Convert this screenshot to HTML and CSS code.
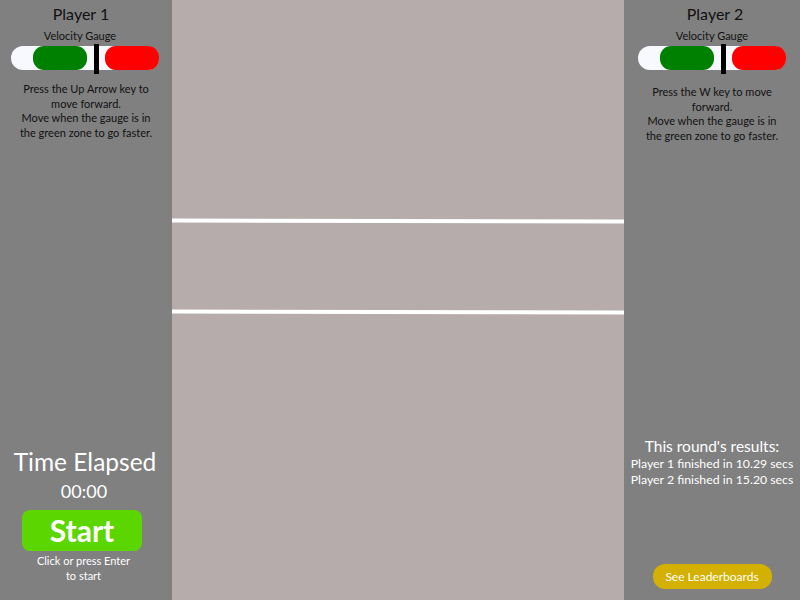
FILE: index.html
```html
<!DOCTYPE html>
<html>
<head>
<meta charset="utf-8">
<link rel="stylesheet" href="styles.css">
</head>
<body>
<div class="app">
  <aside class="panel panel-left">
    <div class="top">
      <h2 class="player">Player 1</h2>
      <div class="gauge-label">Velocity Gauge</div>
      <div class="gauge">
        <div class="zone-green"></div>
        <div class="marker"></div>
        <div class="zone-red"></div>
      </div>
      <p class="instructions">Press the Up Arrow key to<br>move forward.<br>Move when the gauge is in<br>the green zone to go faster.</p>
    </div>
    <div class="bottom-left">
      <div class="time-title">Time Elapsed</div>
      <div class="time-value">00:00</div>
      <button class="start-btn">Start</button>
      <p class="start-hint">Click or press Enter<br>to start</p>
    </div>
  </aside>
  <main class="track">
    <div class="lane-line line-1"></div>
    <div class="lane-line line-2"></div>
  </main>
  <aside class="panel panel-right">
    <div class="top top-right">
      <h2 class="player">Player 2</h2>
      <div class="gauge-label">Velocity Gauge</div>
      <div class="gauge gauge-right">
        <div class="zone-green"></div>
        <div class="marker"></div>
        <div class="zone-red"></div>
      </div>
      <p class="instructions">Press the W key to move<br>forward.<br>Move when the gauge is in<br>the green zone to go faster.</p>
    </div>
    <div class="results">
      <div class="results-title">This round's results:</div>
      <div class="results-line">Player 1 finished in 10.29 secs</div>
      <div class="results-line">Player 2 finished in 15.20 secs</div>
    </div>
    <button class="leader-btn">See Leaderboards</button>
  </aside>
</div>
</body>
</html>
```

FILE: styles.css
```css
* { box-sizing: border-box; }
html, body { margin: 0; padding: 0; }
body {
  font-family: Lato, "Open Sans", sans-serif;
  width: 800px;
  height: 600px;
  overflow: hidden;
}
.app {
  display: flex;
  width: 800px;
  height: 600px;
}
.panel {
  background: #808080;
  display: flex;
  flex-direction: column;
  align-items: center;
  text-align: center;
}
.panel-left { width: 172px; }
.panel-right { width: 176px; }
.track {
  width: 452px;
  background: #b5acab;
  display: flex;
  flex-direction: column;
  padding-top: 219px;
}
.lane-line {
  height: 4px;
  background: #ffffff;
  transform: rotate(0.12deg);
}
.line-2 { margin-top: 87px; }

.top {
  display: flex;
  flex-direction: column;
  align-items: center;
  padding-top: 4px;
  width: 100%;
}
.player {
  margin: 0;
  font-size: 16px;
  font-weight: normal;
  line-height: 20px;
  color: #111;
}
.panel-left .player { margin-right: 10px; }
.panel-right .player { margin-left: 6px; }
.gauge-label {
  font-size: 11px;
  line-height: 14px;
  margin-top: 5px;
  color: #111;
}
.panel-left .gauge-label { margin-right: 12px; }
.gauge {
  position: relative;
  width: 148px;
  height: 24px;
  margin-top: 3px;
  background: #f8f8ff;
  border-radius: 12px;
  display: flex;
  align-items: stretch;
  margin-left: -2px;
}
.gauge-right { margin-left: 0; width: 148px; margin-top: 3px; }
.zone-green {
  margin-left: 22px;
  width: 54px;
  background: #008000;
  border-radius: 11px;
}
.marker {
  margin-left: 7px;
  width: 5px;
  margin-top: -2px;
  margin-bottom: -4px;
  background: #000;
}
.zone-red {
  margin-left: 6px;
  flex: 1;
  background: #ff0000;
  border-radius: 11px;
}
.instructions {
  margin: 12px 0 0;
  font-size: 11px;
  line-height: 14.7px;
  color: #111;
}
.top-right .instructions { margin-top: 15px; }

.bottom-left {
  margin-top: auto;
  padding-bottom: 17px;
  display: flex;
  flex-direction: column;
  align-items: center;
  color: #fff;
  width: 100%;
}
.time-title {
  font-size: 24.5px;
  line-height: 28px;
  margin-left: -2px;
}
.time-value {
  font-size: 18px;
  line-height: 22px;
  margin-top: 4px;
  margin-left: -4px;
}
.start-btn {
  margin-top: 8px;
  width: 120px;
  height: 41px;
  border: none;
  border-radius: 8px;
  background: #5cd600;
  color: #fff;
  font-family: inherit;
  font-weight: bold;
  font-size: 30px;
  line-height: 41px;
  padding: 0;
  margin-left: -8px;
}
.start-hint {
  margin: 2px 0 0;
  font-size: 11px;
  line-height: 15px;
  margin-left: -5px;
}

.results {
  margin-top: auto;
  color: #fff;
  display: flex;
  flex-direction: column;
  align-items: center;
}
.results-title {
  font-size: 15.5px;
  line-height: 20px;
  margin-bottom: 0;
  margin-top: -2px;
}
.results-line {
  font-size: 12.3px;
  line-height: 16px;
}
.leader-btn {
  margin-top: 76px;
  margin-bottom: 11px;
  width: 119px;
  height: 25px;
  border: none;
  border-radius: 12px;
  background: #d4b000;
  color: #fff;
  font-family: inherit;
  font-size: 12px;
  padding: 0;
}
```
